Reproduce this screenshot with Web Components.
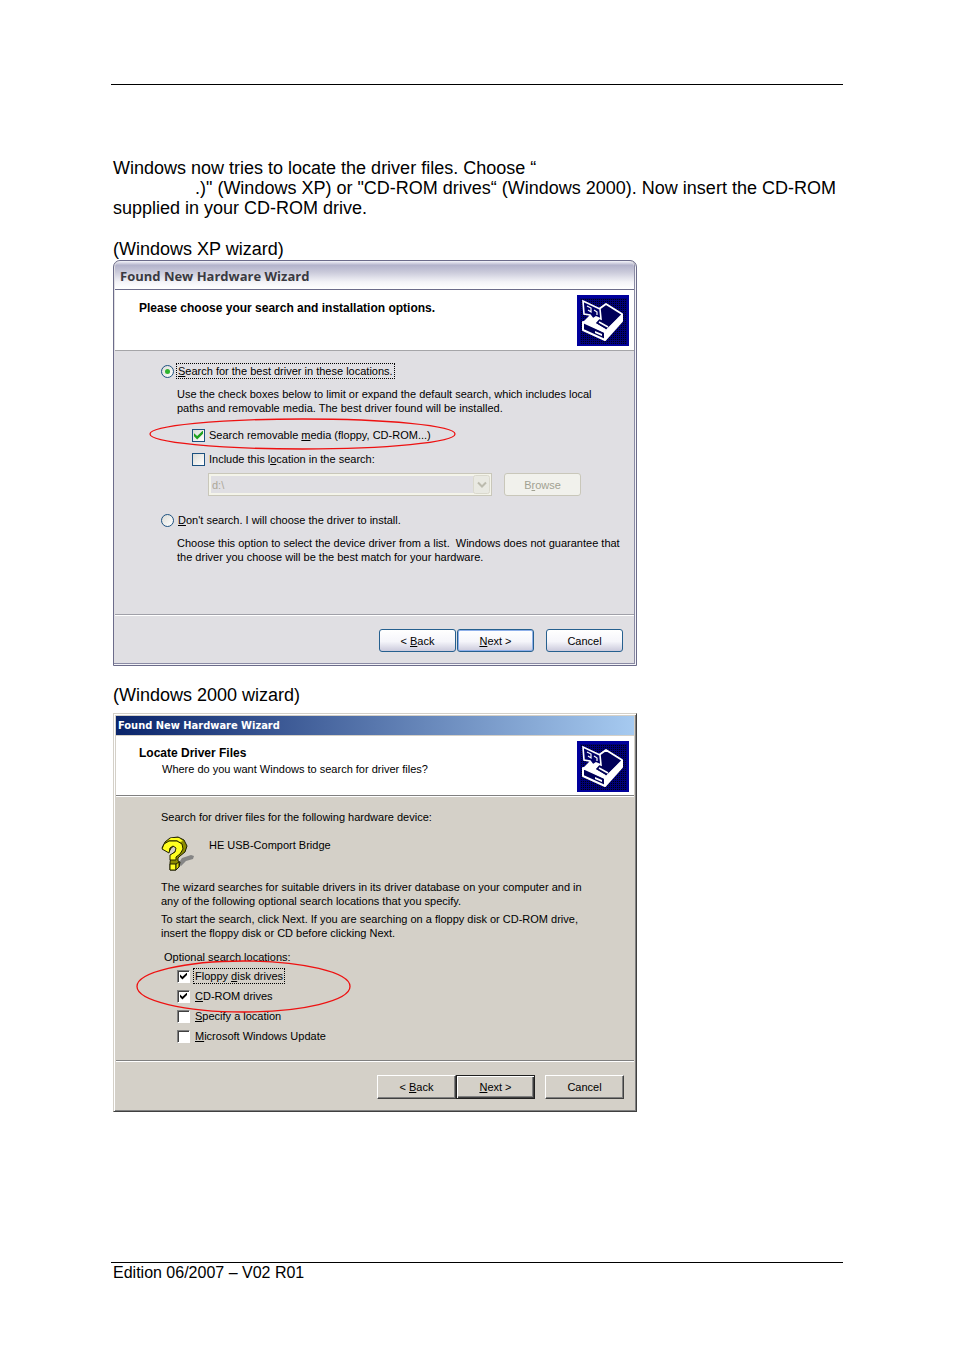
<!DOCTYPE html>
<html lang="en">
<head>
<meta charset="utf-8">
<meta name="viewport" content="width=device-width, initial-scale=1">
<title>Driver installation</title>
<style>
  body { margin: 0; background: #fff; color: #000; font: 18px/20px "Liberation Sans", Arial, sans-serif; }
</style>
</head>
<body>
<manual-page>
  <manual-text>Windows now tries to locate the driver files. Choose “<br><blank-span></blank-span>.)" (Windows XP) or "CD-ROM drives“ (Windows 2000). Now insert the CD-ROM supplied in your CD-ROM drive.</manual-text>
  <manual-text>(Windows XP wizard)</manual-text>
  <xp-wizard></xp-wizard>
  <manual-text>(Windows 2000 wizard)</manual-text>
  <classic-wizard></classic-wizard>
  <span slot="footer">Edition 06/2007 – V02 R01</span>
</manual-page>

<script>
const define = (name, html, setup) => customElements.define(name, class extends HTMLElement {
  constructor() {
    super();
    const t = document.createElement('template');
    t.innerHTML = html;
    this.attachShadow({ mode: 'open' }).append(t.content.cloneNode(true));
  }
  connectedCallback() { if (setup) setup(this, this.shadowRoot); }
});

/* Page frame: a rule at the top, the content, a rule and the edition at the foot */
define('manual-page', `
<style>
  :host { display: flex; flex-direction: column; min-height: 100vh; box-sizing: border-box; padding: 84px 111px 68px; }
  header { border-top: 1px solid #000; }
  main { flex: 1; display: flex; flex-direction: column; padding: 73px 2px 0; }
  footer { border-top: 1px solid #000; padding: 0 2px; font-size: 16px; }
</style>
<header></header>
<main><slot></slot></main>
<footer><slot name="footer"></slot></footer>`);

define('manual-text', `
<style>
  :host { display: block; }
  :host(:first-child) { margin-bottom: 21px; }
</style><slot></slot>`);

define('blank-span', `<style>:host { display: inline-block; width: 82px; }</style>`);

/* Red ellipse drawn over the options to tick */
define('red-mark', `
<style>
  :host { position: absolute; pointer-events: none; }
  svg { display: block; width: 100%; height: 100%; overflow: visible; }
</style>
<svg aria-hidden="true"><ellipse cx="50%" cy="50%" rx="50%" ry="50%" fill="none" stroke="#ee1111" stroke-width="1.3"/></svg>`);

define('driver-icon', `
<style>:host { display: block; width: 52px; height: 51px; } svg { display: block; }</style>
<svg width="52" height="51" viewBox="0 0 52 51" aria-hidden="true">
  <defs><pattern id="p" width="2" height="2" patternUnits="userSpaceOnUse">
    <rect width="2" height="2" fill="#000078"/><path d="M0 0h1v1H0z" fill="#000010"/></pattern></defs>
  <rect width="52" height="51" fill="#00009c"/>
  <rect x="3" y="3" width="47" height="46" fill="url(#p)"/>
  <path d="M29 9 45 19V26L28 45 6 35V27L20 14Z" fill="#000058"/>
  <path d="M6 27 14 19 22 21 25 25 19 28 29 34 28 38Z" fill="#fff"/>
  <path d="M28 37 45 20V26L28 45Z" fill="#fff"/>
  <path d="M22 14 29 9 45 19V26L28 45 6 35V27L28 37V44M28 37 45 20" fill="none" stroke="#fff" stroke-width="2" stroke-linejoin="round"/>
  <path d="M19 28 29 34 40 23 29 16 25 21Z" fill="#000058"/>
  <path d="M22 27 31 32" stroke="#fff" stroke-width="1.6"/>
  <path d="M6 6 23 14 24 24 19 22 16 24 13 20 7 19Z" fill="#000068" stroke="#fff" stroke-width="1.6"/>
  <path d="M10 11 14 13V17L11 15M17 15 20 17V20" fill="none" stroke="#fff" stroke-width="1.2"/>
  <path d="M18 36 25 39V41L18 38Z" fill="#fff"/>
</svg>`);

define('question-icon', `
<style>:host { display: block; width: 34px; height: 36px; } svg { display: block; }</style>
<svg width="34" height="36" viewBox="0 0 34 36" aria-hidden="true">
  <path d="M17 28 21 22 30 19 33 20 32 23 25 25 20 30Z" fill="#858585"/>
  <path d="M1 12 4 6 9 2 17 1 23 4 26 10 24 16 19 20 17 22V25L19 26 18 31 15 34H9V27L10 19 15 15 16 12 13 10 10 12 8 16Z" fill="#8c8c00" stroke="#222200"/>
  <path d="M1 13 3 8 8 5 16 5 21 8 22 13 19 18 15 21V24H9L9 19 14 16 15 12 12 10 9 12 8 17Z" fill="#ffff20" stroke="#222200"/>
  <path d="M5 6 10 2H18L22 5 19 6 16 4 8 4Z" fill="#ffff20"/>
  <path d="M9 28H15V34H9Z" fill="#ffff20" stroke="#222200"/>
  <path d="M15 28 18 26V31L15 34Z" fill="#d8d800" stroke="#222200"/>
</svg>`);

/* Tick box or radio with its label; attributes: type, look, checked, focused */
define('wizard-choice', `
<style>
  :host { display: flex; align-items: center; height: 16px; }
  input { appearance: none; flex: none; margin: 0 3px 0 0; width: 13px; height: 13px; box-sizing: border-box; display: grid; place-items: center;
    border: 1px solid #1c5180; background: linear-gradient(135deg, #dcdcd7, #fff); }
  input[type=radio] { border-radius: 50%; }
  input[type=radio]:checked::before { content: ""; width: 5px; height: 5px; border-radius: 50%; background: #2fb42f; }
  input[type=checkbox]:checked::before { content: ""; width: 9px; height: 9px; background: #21a121;
    clip-path: polygon(0 30%, 35% 62%, 100% 0, 100% 35%, 35% 100%, 0 65%); }
  :host([look=classic]) input { border: 1px solid; border-color: #808080 #fff #fff #808080; background: #fff; box-shadow: inset 1px 1px #404040; margin-right: 4px; }
  :host([look=classic]) input:checked::before { background: #000; width: 7px; height: 7px; }
  label { padding: 0 1px; line-height: 14px; white-space: nowrap; }
  :host([focused]) label { outline: 1px dotted #000; }
</style>
<input id="c"><label for="c"><slot></slot></label>`, (el, root) => {
  const input = root.querySelector('input');
  input.type = el.getAttribute('type') || 'checkbox';
  input.checked = el.hasAttribute('checked');
});

define('wizard-button', `
<style>
  :host { display: block; width: 77px; height: 23px; }
  button { display: block; width: 100%; height: 100%; padding: 0; font: inherit; color: inherit; border: 1px solid #26608f; border-radius: 3px;
    background: linear-gradient(#fff, #f5f5fa 55%, #cbcadc); }
  :host([primary]) button { box-shadow: inset 0 0 0 1px #8fb0ea; }
  :host([off]) button { background: #f1f1ec; border-color: #c9c7ba; color: #a1a192; }
  :host([look=classic]) { width: 79px; height: 24px; }
  :host([look=classic]) button { background: #d4d0c8; border: 1px solid; border-color: #fff #404040 #404040 #fff; border-radius: 0; box-shadow: inset -1px -1px #808080; }
  :host([look=classic][primary]) button { border-color: #202020; box-shadow: inset 1px 1px #fff, inset -1px -1px #404040, inset -2px -2px #808080; }
</style>
<button type="button"><slot></slot></button>`, (el, root) => {
  root.querySelector('button').disabled = el.hasAttribute('off');
});

const wizardBase = `
  :host { display: flex; flex-direction: column; box-sizing: border-box; width: 100%; max-width: 524px; position: relative; font-size: 11px; line-height: 14px; }
  h2, h3, p { margin: 0; }
  h3 { font-size: 12px; line-height: 14px; }
  .head { display: flex; justify-content: space-between; background: #fff; box-sizing: border-box; height: 60px; }
  .body { flex: 1; box-sizing: border-box; display: flex; flex-direction: column; }
  .actions { display: flex; justify-content: flex-end; }
`;

define('xp-wizard', `
<style>${wizardBase}
  :host { min-height: 406px; margin: 1px 0 19px; background: #e0dfe3; border: 1px solid #6c6c8a; border-radius: 7px 7px 0 0; padding: 0 2px 2px 1px; box-shadow: inset -1px -1px #f4f4f8, inset -2px -2px #8a8aa4; }
  h2 { height: 29px; box-sizing: border-box; padding-left: 5px; font: bold 13px/31px "Open Sans", "Liberation Sans", sans-serif; color: #3a3a42;
    border-bottom: 1px solid #6c6c8a; border-radius: 6px 6px 0 0; background: linear-gradient(#f5f5fa, #b3b3cb 15%, #cacada 40%, #f4f4f8 75%, #fff); }
  .head { padding: 5px 5px 0 24px; border-bottom: 1px solid #a5a5a8; height: 61px; }
  .head h3 { padding-top: 6px; }
  .body { padding: 12px 9px 0 46px; }
  .indent { padding: 8px 0 0 16px; white-space: nowrap; }
  .sub { padding-left: 31px; }
  .check { margin-top: 12px; }
  .check + .check { margin-top: 8px; }
  .other { margin-top: 16px; }
  .path { display: flex; gap: 12px; padding: 6px 0 0 47px; }
  .combo { position: relative; width: 284px; height: 23px; }
  select { appearance: none; display: block; width: 100%; height: 100%; padding: 0 3px; font: inherit; color: #aca899; opacity: 1; border: 1px solid #c9c7ba; border-radius: 0; background: #e0dfe3; box-shadow: inset 0 0 0 2px #f4f4ea; }
  .combo svg { position: absolute; right: 2px; top: 2px; pointer-events: none; }
  .actions { border-top: 1px solid #a0a0a8; box-shadow: inset 0 1px #fff; height: 49px; box-sizing: border-box; padding: 14px 11px 0 0; gap: 1px; }
  .gap { margin-left: 11px; }
  red-mark { left: 36px; top: 158px; width: 305px; height: 30px; }
</style>
<h2>Found New Hardware Wizard</h2>
<div class="head"><h3>Please choose your search and installation options.</h3><driver-icon></driver-icon></div>
<div class="body">
  <wizard-choice type="radio" checked focused><u>S</u>earch for the best driver in these locations.</wizard-choice>
  <p class="indent">Use the check boxes below to limit or expand the default search, which includes local<br>paths and removable media. The best driver found will be installed.</p>
  <wizard-choice class="sub check" checked>Search removable <u>m</u>edia (floppy, CD-ROM...)</wizard-choice>
  <wizard-choice class="sub check">Include this l<u>o</u>cation in the search:</wizard-choice>
  <div class="path">
    <div class="combo"><select disabled aria-label="Location"><option>d:\\</option></select>
      <svg width="17" height="19" viewBox="0 0 17 19" aria-hidden="true"><rect x=".5" y=".5" width="16" height="18" rx="2" fill="#e9e9e2" stroke="#dad9cd"/><path d="M5 7.5 9 11.5 13 7.5" fill="none" stroke="#bcbbae" stroke-width="2"/></svg></div>
    <wizard-button off>B<u>r</u>owse</wizard-button>
  </div>
  <wizard-choice type="radio" class="other"><u>D</u>on't search. I will choose the driver to install.</wizard-choice>
  <p class="indent">Choose this option to select the device driver from a list.&nbsp; Windows does not guarantee that<br>the driver you choose will be the best match for your hardware.</p>
</div>
<div class="actions"><wizard-button>&lt; <u>B</u>ack</wizard-button><wizard-button primary><u>N</u>ext &gt;</wizard-button><wizard-button class="gap">Cancel</wizard-button></div>
<red-mark></red-mark>`);

define('classic-wizard', `
<style>${wizardBase}
  :host { min-height: 399px; margin-top: 8px; background: #d4d0c8; border: 1px solid; border-color: #d4d0c8 #404040 #404040 #d4d0c8; padding: 2px 2px 1px 2px; box-shadow: inset 1px 1px #fff, inset -1px -1px #808080; }
  h2 { height: 19px; padding-left: 2px; margin-bottom: 1px; font: bold 11px/19px "DejaVu Sans Condensed", "Liberation Sans", sans-serif; color: #fff; background: linear-gradient(90deg, #0a246a, #a6caf0); }
  .head { padding: 5px 5px 0 23px; border-bottom: 1px solid #808080; box-shadow: 0 1px #fff; }
  .head h3 { padding-top: 5px; }
  .head p { padding: 2px 0 0 23px; }
  .body { padding: 14px 9px 0 45px; }
  .device { display: flex; gap: 14px; padding: 12px 0 8px; }
  .device p { padding-top: 2px; }
  .hint { padding-top: 4px; }
  .legend { padding: 10px 0 4px 3px; }
  .options { padding-left: 16px; display: grid; gap: 4px; }
  .actions { border-top: 1px solid #808080; box-shadow: inset 0 1px #fff; height: 50px; box-sizing: border-box; padding: 14px 10px 0 0; }
  .gap { margin-left: 10px; }
  red-mark { left: 23px; top: 247px; width: 213px; height: 51px; }
</style>
<h2>Found New Hardware Wizard</h2>
<div class="head"><div><h3>Locate Driver Files</h3><p>Where do you want Windows to search for driver files?</p></div><driver-icon></driver-icon></div>
<div class="body">
  <p>Search for driver files for the following hardware device:</p>
  <div class="device"><question-icon></question-icon><p>HE USB-Comport Bridge</p></div>
  <p>The wizard searches for suitable drivers in its driver database on your computer and in<br>any of the following optional search locations that you specify.</p>
  <p class="hint">To start the search, click Next. If you are searching on a floppy disk or CD-ROM drive,<br>insert the floppy disk or CD before clicking Next.</p>
  <p class="legend">Optional search locations:</p>
  <div class="options">
    <wizard-choice look="classic" checked focused>Floppy <u>d</u>isk drives</wizard-choice>
    <wizard-choice look="classic" checked><u>C</u>D-ROM drives</wizard-choice>
    <wizard-choice look="classic"><u>S</u>pecify a location</wizard-choice>
    <wizard-choice look="classic"><u>M</u>icrosoft Windows Update</wizard-choice>
  </div>
</div>
<div class="actions"><wizard-button look="classic">&lt; <u>B</u>ack</wizard-button><wizard-button look="classic" primary><u>N</u>ext &gt;</wizard-button><wizard-button look="classic" class="gap">Cancel</wizard-button></div>
<red-mark></red-mark>`);
</script>
</body>
</html>
